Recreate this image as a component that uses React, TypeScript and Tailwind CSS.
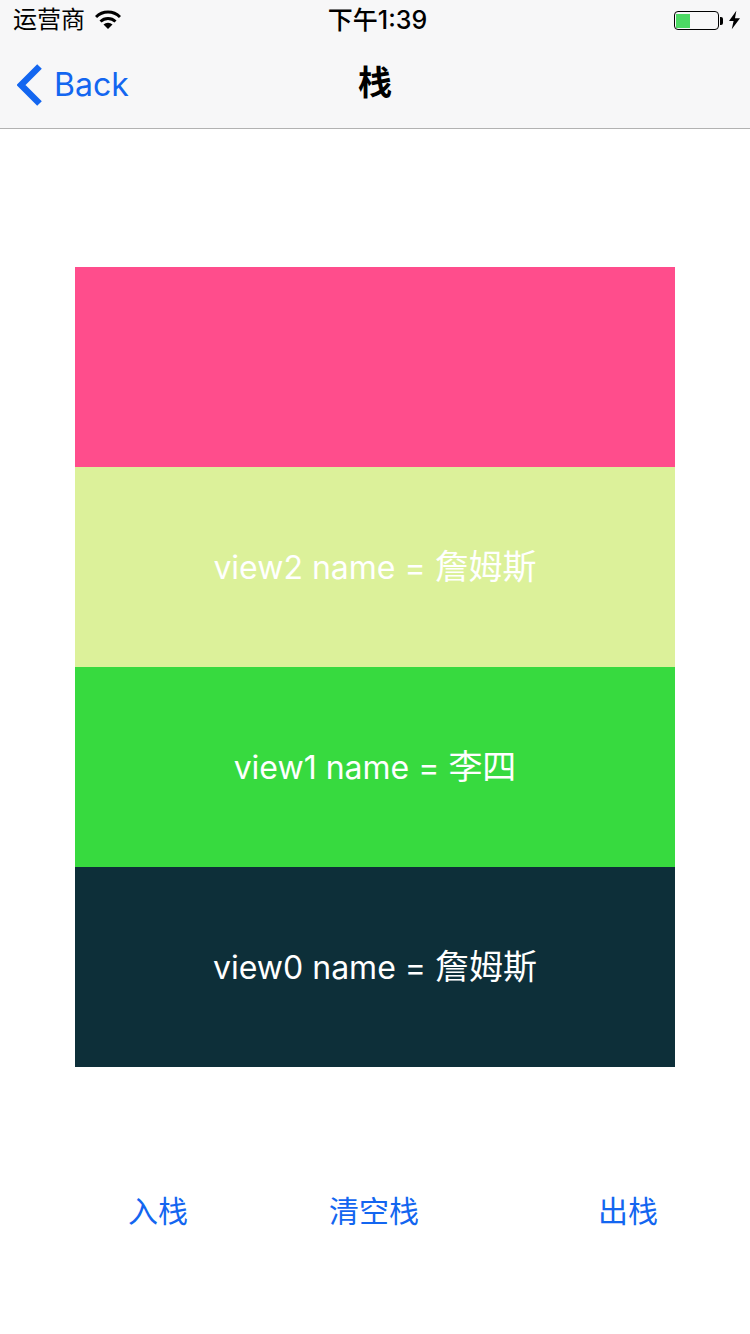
import React from 'react';

const font = 'font-["Inter","Noto_Sans_CJK_SC",sans-serif]';

const rows = [
    { id: 'top', label: '', name: '', color: 'bg-[#ff4d8c]' },
    { id: 'view2', label: 'view2 name = ', name: '詹姆斯', color: 'bg-[#dcf19a]' },
    { id: 'view1', label: 'view1 name = ', name: '李四', color: 'bg-[#37da3f]' },
    { id: 'view0', label: 'view0 name = ', name: '詹姆斯', color: 'bg-[#0d2f39]' },
];

const Wifi = () => (
    <svg width="26" height="20" viewBox="0 0 26 20" className="ml-[10px]">
        <path d="M1 7 A17 17 0 0 1 25 7" fill="none" stroke="#000" strokeWidth="3" />
        <path d="M5.5 11.5 A11 11 0 0 1 20.5 11.5" fill="none" stroke="#000" strokeWidth="3" />
        <path d="M13 19 L8.5 14.5 A6.5 6.5 0 0 1 17.5 14.5 Z" fill="#000" />
    </svg>
);

const App: React.FC = () => {
    return (
        <div className={`w-[750px] h-[1334px] bg-white flex flex-col ${font}`}>
            {/* status bar + nav */}
            <div className="bg-[#f7f7f8] border-b border-[#b2b2b2] h-[129px] flex flex-col">
                <div className="h-[40px] flex items-center justify-between pl-[13px] pr-[10px] text-black">
                    <div className="w-[240px] flex items-center">
                        <span className="text-[24px] leading-none">运营商</span>
                        <Wifi />
                    </div>
                    <span className="text-[25px] leading-none font-medium ml-[2px]">下午1:39</span>
                    <div className="w-[240px] flex items-center justify-end">
                        <div className="w-[45px] h-[19px] mt-[1px] border-[1.5px] border-black rounded-[4px] p-[1.5px]">
                            <div className="w-[14px] h-full bg-[#4cd964]" />
                        </div>
                        <div className="w-[3px] h-[8px] bg-black rounded-r-[2px] ml-[1px] mt-[1px]" />
                        <svg width="11" height="20" viewBox="0 0 12 20" className="ml-[6px]">
                            <path d="M8 0 L0 11 L5 11 L3 20 L12 8 L6.5 8 Z" fill="#000" />
                        </svg>
                    </div>
                </div>
                <div className="flex-1 relative flex items-center justify-center">
                    <div className="absolute left-[17px] top-[24px] flex items-center text-[#1366f0]">
                        <svg width="26" height="42" viewBox="0 0 26 42">
                            <path d="M22.5 2.5 L4 21 L22.5 39.5" fill="none" stroke="#1366f0" strokeWidth="6.5" />
                        </svg>
                        <span className="text-[32px] leading-none ml-[11px]">Back</span>
                    </div>
                    <span className="text-[34px] leading-none font-bold text-black mt-[-3px]">栈</span>
                </div>
            </div>

            {/* stack */}
            <div className="mt-[138px] mx-[75px] flex flex-col">
                {rows.map(row => (
                    <div key={row.id} className={`h-[200px] flex items-center justify-center text-white text-[32px] pb-[2px] whitespace-pre ${row.color}`}>
                        <span>
                            {row.label}
                            <span className="text-[34px]">{row.name}</span>
                        </span>
                    </div>
                ))}
            </div>

            {/* buttons */}
            <div className="mt-[124px] pl-[128px] flex items-center text-[#1366f0] text-[30px] leading-[40px]">
                <button>入栈</button>
                <button className="ml-[141px]">清空栈</button>
                <button className="ml-[179px]">出栈</button>
            </div>
        </div>
    );
};

export default App;
